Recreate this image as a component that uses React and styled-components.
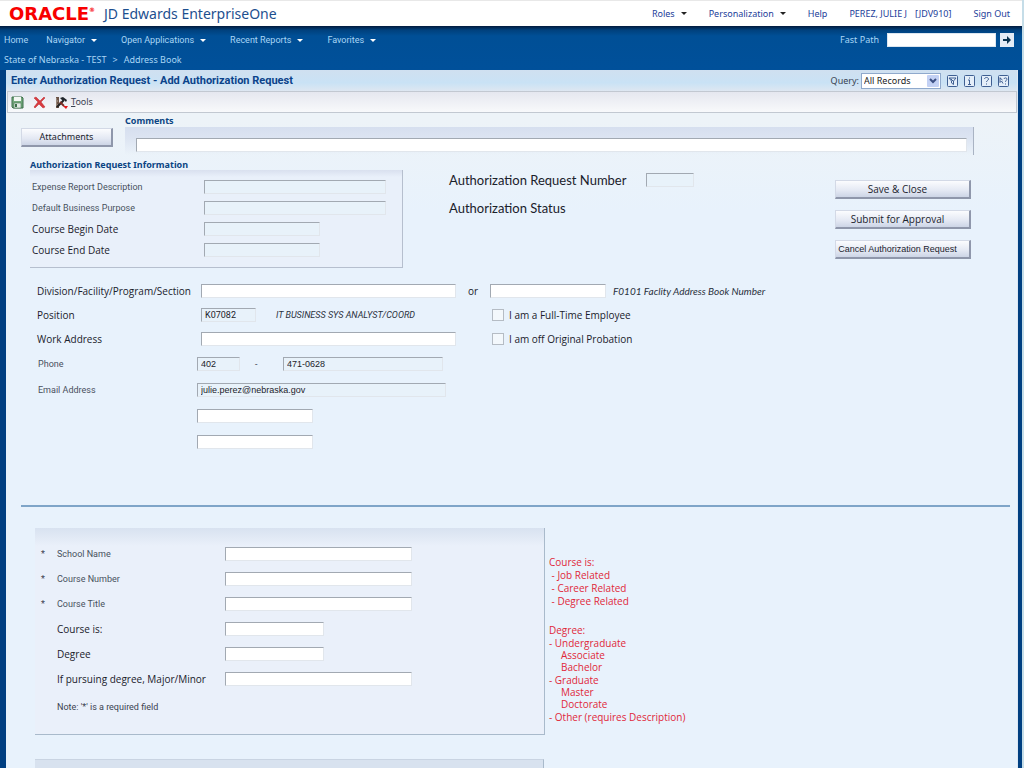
import React, { useState } from 'react'
import styled, { createGlobalStyle } from 'styled-components'

const UI_FONT = 'Roboto, "Noto Sans", sans-serif'
const NAV_FONT = '"Noto Sans", "Open Sans", sans-serif'
const FORM_FONT = '"Open Sans", "Noto Sans", sans-serif'
const STATUS_FONT = 'Lato, "Open Sans", sans-serif'
const ARIAL = '"Liberation Sans", Arial, sans-serif'

const GlobalStyle = createGlobalStyle`
    *, *::before, *::after {
        box-sizing: border-box;
    }

    body {
        margin: 0;
        background-color: #003F81;
        font-family: ${UI_FONT};
        font-size: 9px;
        line-height: 12px;
        color: #3A4250;
    }

    button, input, select {
        font-family: inherit;
        font-size: inherit;
        line-height: inherit;
    }
`

const Page = styled.div`
    min-height: 100vh;
    display: flex;
    flex-direction: column;
    border-right: 2px solid #C5DDE8;
`

const TopBar = styled.header`
    height: 26px;
    display: flex;
    align-items: center;
    justify-content: space-between;
    padding: 0 12px 0 9px;
    background-color: #FFF;
    border-top: 1px solid #E8E8E8;
`

const Brand = styled.div`
    display: flex;
    align-items: center;
`

const Oracle = styled.span`
    width: 95px;
    font-family: "DejaVu Sans", sans-serif;
    font-size: 18px;
    font-weight: 700;
    line-height: 20px;
    color: #F80000;

    sup {
        font-size: 6px;
        line-height: 6px;
        vertical-align: 8px;
    }
`

const Product = styled.span`
    font-family: ${NAV_FONT};
    font-size: 14px;
    line-height: 20px;
    color: #1D4F8F;
`

const Account = styled.nav`
    display: flex;
    align-items: center;
    gap: 22px;
    font-family: ${NAV_FONT};
    color: #22409A;
`

const MenuLink = styled.a`
    display: inline-flex;
    align-items: center;
    gap: 6px;
    color: inherit;
    text-decoration: none;
    white-space: nowrap;

    &::after {
        content: "";
        display: ${props => props.$menu ? 'block' : 'none'};
        border: 3px solid transparent;
        border-top: 3px solid ${props => props.$arrow || '#222'};
        border-bottom: 0;
    }
`

const User = styled.span`
    display: flex;
    gap: 8px;
`

const NavArea = styled.div`
    height: 44px;
    padding: 6px 8px 0 4px;
    color: #A9D6F5;
    background: linear-gradient(#021B3D 0, #00407C 4px, #004F96 10px, #00509A 100%);
`

const NavRow = styled.div`
    height: 16px;
    display: flex;
    align-items: center;
    justify-content: space-between;
`

const Menus = styled.nav`
    display: flex;
    gap: 24px;

    a:first-child {
        margin-right: -6px;
    }
`

const FastPath = styled.form`
    display: flex;
    align-items: center;
    gap: 4px;

    label {
        margin-right: 4px;
        font-family: ${NAV_FONT};
    }

    input {
        width: 109px;
        height: 14px;
        padding: 0 3px;
        border: 1px solid #DCE6F0;
        background-color: #FFF;
    }
`

const GoButton = styled.button`
    width: 14px;
    height: 14px;
    display: flex;
    align-items: center;
    justify-content: center;
    padding: 0;
    border: 0;
    background-color: #E4ECF6;
`

const Crumbs = styled.nav`
    display: flex;
    gap: 6px;
    padding-top: 6px;
    font-family: ${NAV_FONT};
`

const Panel = styled.main`
    flex: 1;
    display: flex;
    flex-direction: column;
    margin: 0 4px 0 6px;
    background: linear-gradient(#EDF3F8 0, #EDF3F8 50px, #E8F2FC 140px, #E8F2FC 100%);
    border-right: 1px solid #DCE8F4;
`

const TitleBar = styled.div`
    height: 21px;
    display: flex;
    align-items: center;
    justify-content: space-between;
    padding: 0 8px 0 5px;
    background: linear-gradient(#D0E0F0, #C9E2F5 60%, #DEE7F1);

    h1 {
        margin: 0;
        font-size: 11px;
        line-height: 16px;
        color: #0B438A;
    }
`

const Query = styled.div`
    display: flex;
    align-items: center;
    gap: 6px;
    font-family: ${NAV_FONT};

    label {
        margin-right: -4px;
    }
`

const SelectBox = styled.span`
    position: relative;
    display: flex;

    select {
        width: 80px;
        height: 16px;
        padding: 0 16px 0 2px;
        appearance: none;
        border: 1px solid #8FA9CC;
        border-radius: 0;
        background-color: #FFF;
        color: #222;
    }

    svg {
        position: absolute;
        right: 2px;
        top: 2px;
        pointer-events: none;
    }
`

const IconButton = styled.button`
    display: inline-flex;
    align-items: center;
    gap: 3px;
    padding: 0;
    border: 0;
    background: none;
    color: inherit;
`

const Toolbar = styled.div`
    height: 22px;
    display: flex;
    align-items: center;
    gap: 9px;
    margin-left: 1px;
    padding-left: 3px;
    border: 1px solid #C2C8D1;
    background: linear-gradient(#E5E7EF, #F8F9FB);
    font-family: ${NAV_FONT};
`

const Heading = styled.h2`
    margin: 0;
    font-family: ${NAV_FONT};
    font-size: 9px;
    line-height: 11px;
    color: #0B4583;
`

const Button = styled.button`
    width: 100%;
    height: 19px;
    padding: 0 ${props => props.$centered ? 0 : 10}px 0 0;
    border: 1px solid #D3D9E6;
    border-right: 2px solid #8F97AB;
    border-bottom: 2px solid #8F97AB;
    background: linear-gradient(#FBFCFE, #E3E8F3 60%, #CDD5E6);
    font-family: ${props => props.$font || FORM_FONT};
    font-size: ${props => props.$size || 10}px;
    color: #1B232E;
    white-space: nowrap;
`

const Field = styled.input`
    width: ${props => props.$width};
    height: 14px;
    padding: 0 3px;
    border: 1px solid #E1E6EC;
    border-top-color: #A2A9B2;
    border-left-color: #A2A9B2;
    border-radius: 0;
    background-color: ${props => props.readOnly ? '#E8F2FA' : '#FFF'};
    font-family: ${props => props.$font || 'inherit'};
    color: #1C222B;
`

const CommentsSection = styled.section`
    display: grid;
    grid-template-columns: 92px 1fr;
    column-gap: 12px;
    padding: 2px 43px 0 15px;
`

const Attachments = styled.div`
    padding-top: 13px;
`

const CommentsBox = styled.div`
    height: 28px;
    padding: 11px 6px 0 11px;
    border-right: 1px solid #A9B3C3;
    background: linear-gradient(#D6DFEF, #DDE5F2 12px, transparent);
`

const InfoSection = styled.section`
    display: grid;
    grid-template-columns: 373px 1fr 136px;
    column-gap: 46px;
    padding: 4px 46px 0 24px;
`

const InfoBox = styled.div`
    padding: 6px 0 7px 2px;
    border-right: 1px solid #B6BFCE;
    border-bottom: 1px solid #B6BFCE;
    background: linear-gradient(#D9E0EF, #E9F0FA 7px);
`

const FormRow = styled.div`
    display: grid;
    grid-template-columns: ${props => props.$columns};
    align-items: center;
    height: ${props => props.$height}px;
`

const Label = styled.label`
    font-family: ${props => props.$strong ? FORM_FONT : 'inherit'};
    font-size: ${props => props.$strong ? 10 : 9}px;
    color: ${props => props.$strong ? '#1A212B' : '#48505D'};
    white-space: nowrap;
`

const Status = styled.div`
    padding-top: 7px;
    font-family: ${STATUS_FONT};
    font-size: 13px;
    color: #1A212B;
`

const StatusRow = styled.div`
    height: 28px;
    display: flex;
    align-items: center;
    gap: 20px;
    white-space: nowrap;
`

const Actions = styled.div`
    display: flex;
    flex-direction: column;
    gap: 11px;
    padding-top: 21px;
`

const Employee = styled.section`
    padding: 11px 15px 0 31px;
`

const Contact = styled.section`
    padding-left: 32px;
`

const Inline = styled.div`
    display: flex;
    align-items: center;
    gap: ${props => props.$gap}px;
`

const Dash = styled.span`
    width: 13px;
`

const Or = styled(Label)`
    text-align: center;
`

const Italic = styled.em`
    font-family: ${props => props.$font || 'inherit'};
    font-size: ${props => props.$size || 9}px;
    color: #2A313C;
    white-space: nowrap;
`

const Check = styled.label`
    display: flex;
    align-items: center;
    gap: 5px;
    padding-left: 2px;
    font-family: ${FORM_FONT};
    font-size: 10px;
    color: #1A212B;

    input {
        width: 12px;
        height: 12px;
        margin: 0;
        appearance: none;
        border: 1px solid #B5BCC4;
        background-color: #F3F8FC;
    }

    input:checked {
        background-color: #0B4583;
    }
`

const Rule = styled.hr`
    width: auto;
    height: 2px;
    margin: 50px 7px 0 15px;
    border: 0;
    background-color: #7FA5C8;
`

const CourseSection = styled.section`
    display: flex;
    align-items: flex-start;
    gap: 4px;
    padding: 21px 0 0 29px;
`

const CourseBox = styled.div`
    width: 510px;
    padding: 13px 0 21px 6px;
    border-right: 1px solid #A9BACB;
    border-bottom: 1px solid #A9BACB;
    background: linear-gradient(#D8E2F0, #EAF0FA 18px);
`

const RequiredNote = styled.p`
    margin: 10px 0 0 16px;
`

const Notes = styled.aside`
    display: flex;
    flex-direction: column;
    gap: 17px;
    padding-top: 28px;
    font-family: ${FORM_FONT};
    font-size: 10px;
    color: #E0283A;
`

const NoteList = styled.ul`
    display: flex;
    flex-direction: column;
    gap: 1px;
    margin: 0;
    padding: 0;
    list-style: none;

    ul {
        margin: 0;
        padding-left: 12px;
        list-style: none;
    }
`

const NextBox = styled.section`
    flex: 1;
    min-height: 9px;
    width: 509px;
    margin: 24px 0 0 29px;
    border-top: 1px solid #C9D4E2;
    border-right: 1px solid #A9BACB;
    background-color: #D8E2EF;
`

const SaveIcon = () => (
    <svg width="13" height="13" viewBox="0 0 13 13">
        <path d="M1 1h10l1 1v10H2l-1-1z" fill="#74A87C" stroke="#3D6F4A" />
        <rect x="3" y="1" width="7" height="4" fill="#F3F7F3" />
        <rect x="3" y="7" width="7" height="5" fill="#E2EAE4" stroke="#4A7855" strokeWidth=".6" />
        <rect x="4" y="8" width="2" height="3" fill="#3D6F4A" />
    </svg>
)

const CloseIcon = () => (
    <svg width="13" height="13" viewBox="0 0 13 13">
        <path d="M1 2l2-1 4 4 4-4 1 1-4 4 4 5-2 1-4-4-4 4-1-1 4-5z" fill="#D93A3E" stroke="#B8292E" strokeWidth=".5" />
    </svg>
)

const ToolsIcon = () => (
    <svg width="13" height="13" viewBox="0 0 13 13">
        <path d="M1 1h3v11H1z" fill="#6B5346" />
        <path d="M1 3h1M1 5h2M1 7h1M1 9h2" stroke="#E7DED4" strokeWidth=".7" />
        <path d="M2 11L9 4" stroke="#222" strokeWidth="2" />
        <path d="M5 2l3-1 4 3-1 2-2-2-1 1z" fill="#20262B" />
        <path d="M5 6l4 4" stroke="#7A2C24" strokeWidth="2" />
        <path d="M8 10h5l-2 3z" fill="#E3161B" />
    </svg>
)

const ChevronIcon = () => (
    <svg width="12" height="12" viewBox="0 0 12 12">
        <rect width="12" height="12" rx="1" fill="#C3D1F4" />
        <path d="M3 4l3 3 3-3" fill="none" stroke="#3C5084" strokeWidth="2" />
    </svg>
)

const GoIcon = () => (
    <svg width="10" height="10" viewBox="0 0 10 10">
        <path d="M1 4h4V1l4 4-4 4V6H1z" fill="#0A3350" />
    </svg>
)

const BoxIcon = ({ children }) => (
    <svg width="11" height="12" viewBox="0 0 11 12" fill="none" stroke="#3F5F92" strokeWidth="1">
        <rect x=".5" y=".5" width="10" height="11" rx="1" fill="#E4EEF9" />
        {children}
    </svg>
)

const queryIcons = [
    { label: 'Filter', shape: <path d="M2 3h7L6.500 6v3.500L4.500 8V6zM3.500 3.500L6 6" /> },
    { label: 'Information', shape: <path d="M5.500 2.500v1M4 5h1.500v4M4 9.500h3" /> },
    { label: 'Help', shape: <path d="M3.500 4c0-2 4-2 4 0 0 1.500-2 1.500-2 3M5.500 8.500v1" /> },
    { label: 'Item help', shape: <path d="M2 2.500v5l1.500-1.500L5 8.500M2 3l2.500 2M6 4c0-1.500 3-1.500 3 0 0 1.200-1.500 1.500-1.500 2.800M7.500 8.500v1" /> }
]

const requestFields = [
    { id: 'expense', label: 'Expense Report Description', width: '182px' },
    { id: 'purpose', label: 'Default Business Purpose', width: '182px' },
    { id: 'begin', label: 'Course Begin Date', width: '116px', strong: true },
    { id: 'end', label: 'Course End Date', width: '116px', strong: true }
]

const courseFields = [
    { id: 'school', label: 'School Name', width: '187px', required: true },
    { id: 'number', label: 'Course Number', width: '187px', required: true },
    { id: 'title', label: 'Course Title', width: '187px', required: true },
    { id: 'type', label: 'Course is:', width: '99px', strong: true },
    { id: 'degree', label: 'Degree', width: '99px', strong: true },
    { id: 'major', label: 'If pursuing degree, Major/Minor', width: '187px', strong: true }
]

const EMPLOYEE_COLUMNS = '164px 255px 34px 1fr'

function Header() {
    return (
        <>
            <TopBar>
                <Brand>
                    <Oracle>ORACLE<sup>®</sup></Oracle>
                    <Product>JD Edwards EnterpriseOne</Product>
                </Brand>
                <Account>
                    <MenuLink href="#roles" $menu>Roles</MenuLink>
                    <MenuLink href="#personalization" $menu>Personalization</MenuLink>
                    <MenuLink href="#help">Help</MenuLink>
                    <User><span>PEREZ, JULIE J</span><span>[JDV910]</span></User>
                    <MenuLink href="#signout">Sign Out</MenuLink>
                </Account>
            </TopBar>
            <NavArea>
                <NavRow>
                    <Menus>
                        <MenuLink href="#home">Home</MenuLink>
                        {['Navigator', 'Open Applications', 'Recent Reports', 'Favorites'].map(name => (
                            <MenuLink key={name} href="#menu" $menu $arrow="#FFF">{name}</MenuLink>
                        ))}
                    </Menus>
                    <FastPath onSubmit={e => e.preventDefault()}>
                        <label htmlFor="fastpath">Fast Path</label>
                        <input id="fastpath" type="text" />
                        <GoButton aria-label="Go"><GoIcon /></GoButton>
                    </FastPath>
                </NavRow>
                <Crumbs>
                    <MenuLink href="#state">State of Nebraska - TEST</MenuLink>
                    <span>&gt;</span>
                    <MenuLink href="#book">Address Book</MenuLink>
                </Crumbs>
            </NavArea>
        </>
    )
}

function App() {
    const [fullTime, setFullTime] = useState(false)
    const [probation, setProbation] = useState(false)

    return (
        <Page>
            <GlobalStyle />
            <Header />
            <Panel>
                <TitleBar>
                    <h1>Enter Authorization Request - Add Authorization Request</h1>
                    <Query>
                        <label htmlFor="query">Query:</label>
                        <SelectBox>
                            <select id="query"><option>All Records</option></select>
                            <ChevronIcon />
                        </SelectBox>
                        {queryIcons.map(icon => (
                            <IconButton key={icon.label} aria-label={icon.label}>
                                <BoxIcon>{icon.shape}</BoxIcon>
                            </IconButton>
                        ))}
                    </Query>
                </TitleBar>
                <Toolbar>
                    <IconButton aria-label="Save"><SaveIcon /></IconButton>
                    <IconButton aria-label="Close"><CloseIcon /></IconButton>
                    <IconButton><ToolsIcon /><span><u>T</u>ools</span></IconButton>
                </Toolbar>

                <CommentsSection>
                    <Attachments>
                        <Button $font={NAV_FONT} $size={9} $centered>Attachments</Button>
                    </Attachments>
                    <div>
                        <Heading as="label" htmlFor="comments"><b>Comments</b></Heading>
                        <CommentsBox>
                            <Field id="comments" $width="100%" />
                        </CommentsBox>
                    </div>
                </CommentsSection>

                <InfoSection>
                    <div>
                        <Heading>Authorization Request Information</Heading>
                        <InfoBox>
                            {requestFields.map(field => (
                                <FormRow key={field.id} $columns="172px 1fr" $height={21}>
                                    <Label htmlFor={field.id} $strong={field.strong}>{field.label}</Label>
                                    <Field id={field.id} $width={field.width} readOnly />
                                </FormRow>
                            ))}
                        </InfoBox>
                    </div>
                    <Status>
                        <StatusRow>
                            <label htmlFor="request">Authorization Request Number</label>
                            <Field id="request" $width="48px" readOnly />
                        </StatusRow>
                        <StatusRow>Authorization Status</StatusRow>
                    </Status>
                    <Actions>
                        <Button>Save &amp; Close</Button>
                        <Button>Submit for Approval</Button>
                        <Button $font={ARIAL} $size={9}>Cancel Authorization Request</Button>
                    </Actions>
                </InfoSection>

                <Employee>
                    <FormRow $columns={EMPLOYEE_COLUMNS} $height={24}>
                        <Label htmlFor="division" $strong>Division/Facility/Program/Section</Label>
                        <Field id="division" $width="255px" />
                        <Or htmlFor="facility" $strong>or</Or>
                        <Inline $gap={7}>
                            <Field id="facility" $width="116px" />
                            <Italic $font={STATUS_FONT} $size={10}>F0101 Faclity Address Book Number</Italic>
                        </Inline>
                    </FormRow>
                    <FormRow $columns={EMPLOYEE_COLUMNS} $height={24}>
                        <Label htmlFor="position" $strong>Position</Label>
                        <Inline $gap={20}>
                            <Field id="position" $width="55px" defaultValue="K07082" readOnly />
                            <Italic>IT BUSINESS SYS ANALYST/COORD</Italic>
                        </Inline>
                        <span />
                        <Check>
                            <input type="checkbox" checked={fullTime} onChange={e => setFullTime(e.target.checked)} />
                            I am a Full-Time Employee
                        </Check>
                    </FormRow>
                    <FormRow $columns={EMPLOYEE_COLUMNS} $height={24}>
                        <Label htmlFor="address" $strong>Work Address</Label>
                        <Field id="address" $width="255px" />
                        <span />
                        <Check>
                            <input type="checkbox" checked={probation} onChange={e => setProbation(e.target.checked)} />
                            I am off Original Probation
                        </Check>
                    </FormRow>
                </Employee>

                <Contact>
                    <FormRow $columns="159px 1fr" $height={26}>
                        <Label htmlFor="phone">Phone</Label>
                        <Inline $gap={15}>
                            <Field id="phone" $width="43px" $font={ARIAL} defaultValue="402" readOnly />
                            <Dash>-</Dash>
                            <Field aria-label="Phone number" $width="160px" $font={ARIAL} defaultValue="471-0628" readOnly />
                        </Inline>
                    </FormRow>
                    <FormRow $columns="159px 1fr" $height={26}>
                        <Label htmlFor="email">Email Address</Label>
                        <Field id="email" $width="249px" $font={ARIAL} defaultValue="julie.perez@nebraska.gov" readOnly />
                    </FormRow>
                    <FormRow $columns="159px 1fr" $height={26}>
                        <span />
                        <Field aria-label="Contact line 1" $width="116px" />
                    </FormRow>
                    <FormRow $columns="159px 1fr" $height={26}>
                        <span />
                        <Field aria-label="Contact line 2" $width="116px" />
                    </FormRow>
                </Contact>

                <Rule />

                <CourseSection>
                    <CourseBox>
                        {courseFields.map(field => (
                            <FormRow key={field.id} $columns="16px 168px 1fr" $height={25}>
                                <span>{field.required && '*'}</span>
                                <Label htmlFor={field.id} $strong={field.strong}>{field.label}</Label>
                                <Field id={field.id} $width={field.width} />
                            </FormRow>
                        ))}
                        <RequiredNote>Note: '*' is a required field</RequiredNote>
                    </CourseBox>
                    <Notes>
                        <NoteList>
                            <li>Course is:</li>
                            <li>&nbsp;- Job Related</li>
                            <li>&nbsp;- Career Related</li>
                            <li>&nbsp;- Degree Related</li>
                        </NoteList>
                        <NoteList>
                            <li>Degree:</li>
                            <li>
                                - Undergraduate
                                <ul>
                                    <li>Associate</li>
                                    <li>Bachelor</li>
                                </ul>
                            </li>
                            <li>
                                - Graduate
                                <ul>
                                    <li>Master</li>
                                    <li>Doctorate</li>
                                </ul>
                            </li>
                            <li>- Other (requires Description)</li>
                        </NoteList>
                    </Notes>
                </CourseSection>

                <NextBox />
            </Panel>
        </Page>
    )
}

export default App
